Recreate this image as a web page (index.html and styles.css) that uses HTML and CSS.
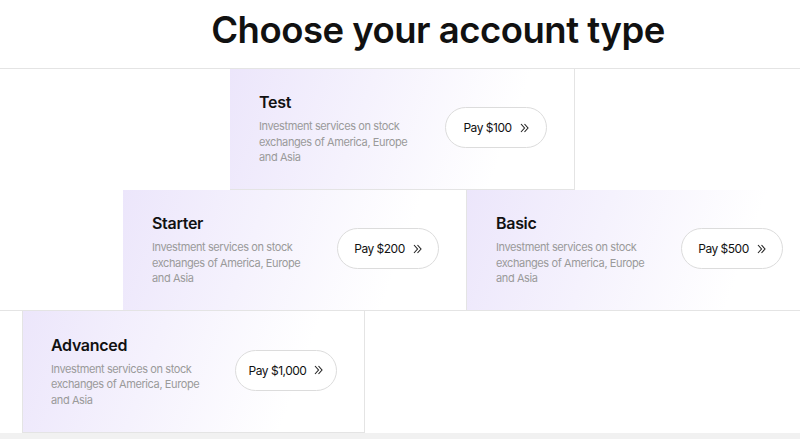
FILE: index.html
```html
<!doctype html>
<html>
  <head>
    <meta charset="UTF-8" />
    <link rel="stylesheet" href="styles.css">
  </head>
  <body>
    <div class="page">
      <h1 class="title">Choose your account type</h1>
      <div class="plans">
        <div class="tier tier-1">
          <div class="plan">
            <div class="info">
              <div class="name">Test</div>
              <p class="desc">Investment services on stock exchanges of America, Europe and Asia</p>
            </div>
            <button class="pay">Pay $100
              <svg class="chev" width="9" height="10" viewBox="0 0 9 10"><path d="M1 1l3.5 4L1 9M4.5 1L8 5 4.5 9" fill="none" stroke="#222" stroke-width="1.1"/></svg>
            </button>
          </div>
        </div>
        <div class="tier tier-2">
          <div class="plan">
            <div class="info">
              <div class="name">Starter</div>
              <p class="desc">Investment services on stock exchanges of America, Europe and Asia</p>
            </div>
            <button class="pay">Pay $200
              <svg class="chev" width="9" height="10" viewBox="0 0 9 10"><path d="M1 1l3.5 4L1 9M4.5 1L8 5 4.5 9" fill="none" stroke="#222" stroke-width="1.1"/></svg>
            </button>
          </div>
          <div class="plan">
            <div class="info">
              <div class="name">Basic</div>
              <p class="desc">Investment services on stock exchanges of America, Europe and Asia</p>
            </div>
            <button class="pay">Pay $500
              <svg class="chev" width="9" height="10" viewBox="0 0 9 10"><path d="M1 1l3.5 4L1 9M4.5 1L8 5 4.5 9" fill="none" stroke="#222" stroke-width="1.1"/></svg>
            </button>
          </div>
        </div>
        <div class="tier tier-3">
          <div class="plan">
            <div class="info">
              <div class="name">Advanced</div>
              <p class="desc">Investment services on stock exchanges of America, Europe and Asia</p>
            </div>
            <button class="pay">Pay $1,000
              <svg class="chev" width="9" height="10" viewBox="0 0 9 10"><path d="M1 1l3.5 4L1 9M4.5 1L8 5 4.5 9" fill="none" stroke="#222" stroke-width="1.1"/></svg>
            </button>
          </div>
        </div>
      </div>
    </div>
  </body>
</html>
```

FILE: styles.css
```css
html,
body {
  margin: 0;
  height: 100%;
  font-family: Inter, "Noto Sans", sans-serif;
  background: #f1f1f1;
  color: #111;
  overflow: hidden;
}
.page {
  background: white;
  width: 800px;
}
.title {
  margin: 0;
  height: 69px;
  padding-left: 76px;
  box-sizing: border-box;
  padding-top: 8px;
  text-align: center;
  font-size: 36.5px;
  font-weight: 600;
  letter-spacing: -0.5px;
  border-bottom: 1px solid #e4e4e4;
}
.tier {
  display: flex;
  height: 121px;
}
.tier-1 {
  padding-left: 230px;
}
.tier-2 {
  padding-left: 123px;
  border-bottom: 1px solid #e4e4e4;
  height: 120px;
}
.tier-3 {
  padding-left: 22px;
  height: 122px;
}
.plan {
  flex: 0 0 344px;
  box-sizing: border-box;
  display: flex;
  align-items: center;
  justify-content: space-between;
  padding: 0 27px 0 29px;
  background: linear-gradient(110deg, #ece6fb 0%, #f5f2fd 38%, #ffffff 78%);
  border-right: 1px solid #e4e4e4;
  border-bottom: 1px solid #e4e4e4;
}
.tier-1 .plan {
  flex-basis: 345px;
}
.tier-2 .plan {
  border-bottom: none;
}
.tier-3 .plan {
  border-left: 1px solid #e4e4e4;
  padding-left: 28px;
  flex-basis: 343px;
}
.name {
  font-size: 16px;
  font-weight: 600;
  letter-spacing: -0.3px;
  margin-bottom: 7px;
}
.desc {
  margin: 0;
  width: 160px;
  font-size: 11px;
  line-height: 15.5px;
  color: #9a9a9a;
  letter-spacing: -0.4px;
}
.pay {
  display: flex;
  align-items: center;
  justify-content: center;
  gap: 8px;
  height: 41px;
  width: 102px;
  border: 1px solid #dcdcdc;
  border-radius: 21px;
  background: white;
  font-family: Inter, "Noto Sans", sans-serif;
  font-size: 12px;
  letter-spacing: -0.5px;
  color: #111;
  cursor: pointer;
  margin-top: -3px;
  padding: 0;
}
```
